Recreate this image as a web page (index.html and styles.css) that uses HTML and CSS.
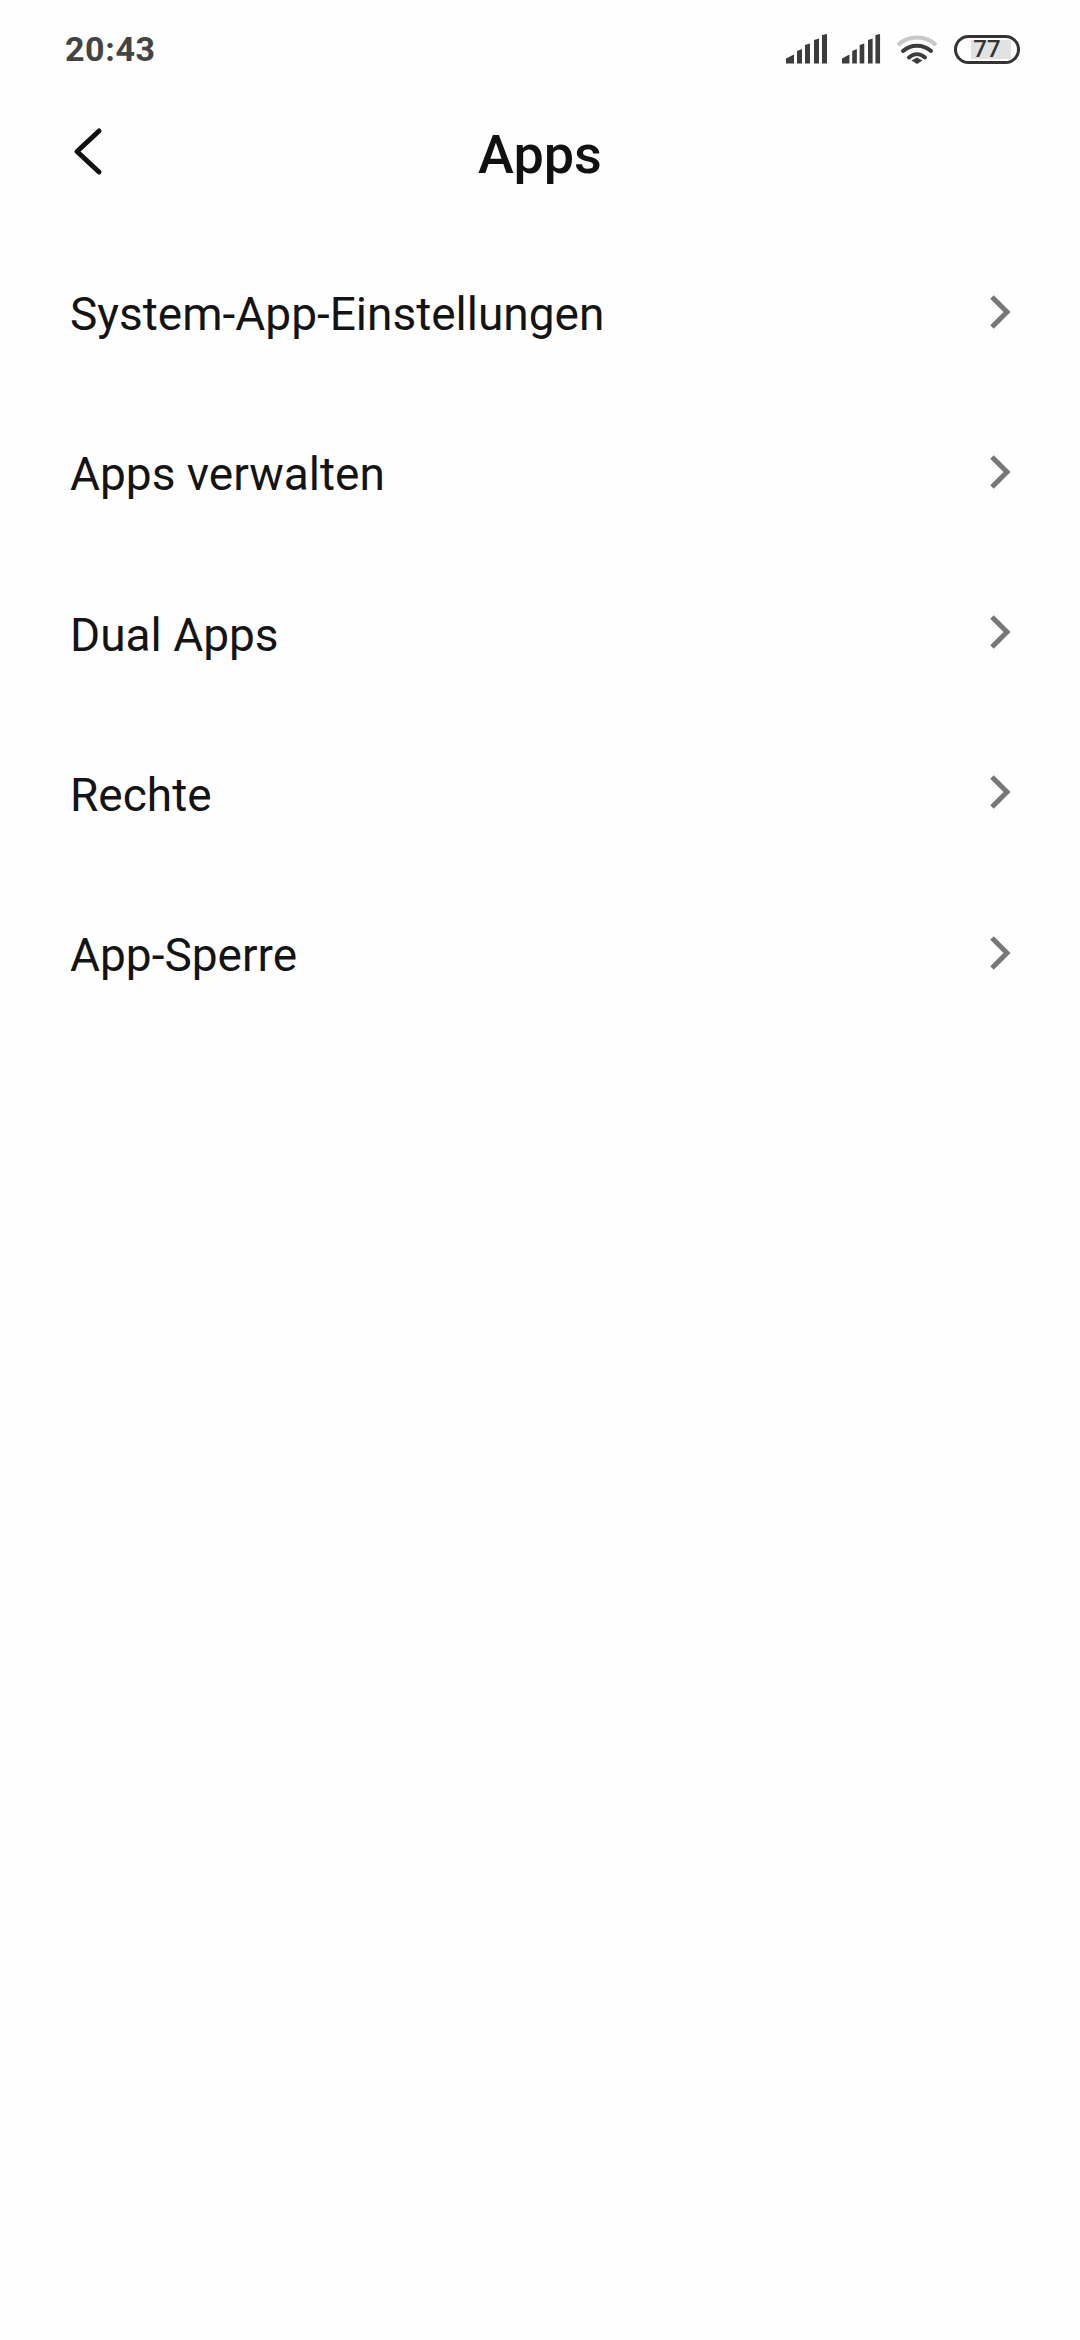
FILE: index.html
```html
<!DOCTYPE html>
<html lang="de">
<head>
<meta charset="utf-8">
<title>Apps</title>
<link rel="stylesheet" href="styles.css">
</head>
<body>
<div class="screen">
  <div class="status">
    <span class="time">20:43</span>
    <div class="status-icons">
      <svg class="signal" width="42" height="30" viewBox="0 0 42 30"><path d="M0 29.500v-5l8-4v9zM11 29.500V17l5-2v14.500zM19 29.500V11l5-1.500v20zM28 29.500V6l5-1.500v25zM36 29.500V1l5-1v29.500z" fill="#3c3c3c"/></svg>
      <svg class="signal" width="39" height="30" viewBox="0 0 42 30" preserveAspectRatio="none"><path d="M0 29.500v-5l8-4v9zM11 29.500V17l5-2v14.500zM19 29.500V11l5-1.500v20zM28 29.500V6l5-1.500v25zM36 29.500V1l5-1v29.500z" fill="#3c3c3c"/></svg>
      <svg class="wifi" width="42" height="30" viewBox="0 0 42 30"><path d="M2 11C12 1 30 1 40 11" fill="none" stroke="#c8c8c8" stroke-width="4"/><path d="M7 17C15 10 27 10 35 17M13 23.500C18 19 24 19 29 23.500" fill="none" stroke="#3c3c3c" stroke-width="4" stroke-linecap="round"/><path d="M15.500 26.500L21 23.500l5.500 3L21 30z" fill="#3c3c3c"/></svg>
      <div class="battery"><div class="level"></div><span class="pct">77</span></div>
    </div>
  </div>
  <header class="nav">
    <svg class="back" width="40" height="50" viewBox="0 0 40 50"><path d="M33 5L11 25.500 33 46" fill="none" stroke="#111" stroke-width="5" stroke-linecap="round" stroke-linejoin="round"/></svg>
    <h1 class="title">Apps</h1>
  </header>
  <ul class="list">
    <li class="row"><span>System-App-Einstellungen</span><svg class="chev" width="26" height="40" viewBox="0 0 26 40"><path d="M4 5l15 15L4 35" fill="none" stroke="#777" stroke-width="5"/></svg></li>
    <li class="row"><span>Apps verwalten</span><svg class="chev" width="26" height="40" viewBox="0 0 26 40"><path d="M4 5l15 15L4 35" fill="none" stroke="#777" stroke-width="5"/></svg></li>
    <li class="row"><span>Dual Apps</span><svg class="chev" width="26" height="40" viewBox="0 0 26 40"><path d="M4 5l15 15L4 35" fill="none" stroke="#777" stroke-width="5"/></svg></li>
    <li class="row"><span>Rechte</span><svg class="chev" width="26" height="40" viewBox="0 0 26 40"><path d="M4 5l15 15L4 35" fill="none" stroke="#777" stroke-width="5"/></svg></li>
    <li class="row"><span>App-Sperre</span><svg class="chev" width="26" height="40" viewBox="0 0 26 40"><path d="M4 5l15 15L4 35" fill="none" stroke="#777" stroke-width="5"/></svg></li>
  </ul>
</div>
</body>
</html>
```
FILE: styles.css
```css
html, body { margin: 0; padding: 0; background: #fefefe; }
.screen { width: 1080px; height: 2340px; overflow: hidden; font-family: Roboto, "Noto Sans", sans-serif; color: #111; }
.status { height: 50px; padding: 24px 60px 0 65px; display: flex; align-items: center; justify-content: space-between; }
.time { font-size: 34px; font-weight: 700; color: #444; letter-spacing: 0.6px; }
.status-icons { display: flex; align-items: center; gap: 14px; }
.signal { display: block; }
.wifi { display: block; margin-left: 1px; }
.battery { position: relative; width: 66px; height: 29px; margin-left: 2px; box-sizing: border-box; border: 3px solid #333; border-radius: 15px; display: flex; align-items: center; justify-content: center; }
.level { position: absolute; left: 14px; top: 2px; bottom: 2px; width: 40px; background: #e2e2e2; }
.pct { position: relative; left: 0; font-size: 24px; font-weight: 500; color: #333; line-height: 1; }
.nav { position: relative; height: 100px; margin-top: 30px; display: flex; align-items: center; justify-content: center; }
.back { position: absolute; left: 66px; top: 22px; }
.title { margin: 0; font-size: 54px; font-weight: 500; color: #111; }
.list { list-style: none; margin: 30px 0 0; padding: 0 66px 0 70px; }
.row { height: 160.250px; display: flex; align-items: center; justify-content: space-between; font-size: 46px; color: #141414; }
.chev { display: block; margin-bottom: 5px; }
```
